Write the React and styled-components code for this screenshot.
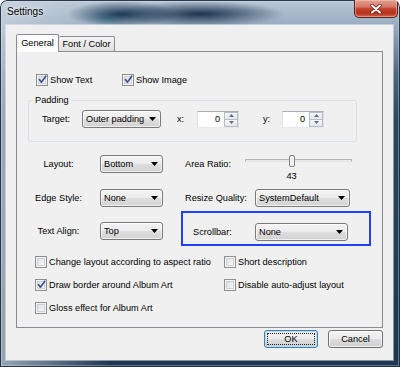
import React from "react";
import styled, { createGlobalStyle } from "styled-components";

const FONT = `"Liberation Sans", Arial, sans-serif`;

const Global = createGlobalStyle`
  html, body { margin: 0; padding: 0; background: #ffffff; }
  body { font-family: ${FONT}; font-size: 9.2px; color: #000; }
  *, *::before, *::after { box-sizing: border-box; }
`;

const Window = styled.div`
  width: 400px;
  height: 367px;
  display: flex;
  flex-direction: column;
  border-radius: 7px 7px 0 0;
  overflow: hidden;
  background:
    radial-gradient(55px 13px at 122px 14px, rgba(22, 50, 80, 0.95), rgba(22, 50, 80, 0)),
    radial-gradient(85px 13px at 200px 14px, rgba(20, 42, 70, 0.95), rgba(20, 42, 70, 0)),
    radial-gradient(22px 7px at 108px 18px, rgba(70, 150, 160, 0.6), rgba(70, 150, 160, 0)),
    radial-gradient(45px 5px at 230px 12px, rgba(140, 165, 190, 0.55), rgba(140, 165, 190, 0)),
    linear-gradient(to right, rgba(205, 215, 226, 0.7) 0px, rgba(205, 215, 226, 0) 110px),
    linear-gradient(to bottom, #b9c7d5 0px, #9db0c3 22px, #7f95ab 42px, #4c6581 75px, #2c4561 120px, #1e3650 100%);
  box-shadow: inset 0 0 0 1px rgba(25, 40, 58, 0.9), inset 0 0 0 2px rgba(220, 230, 240, 0.35);
`;

const TitleBar = styled.div`
  height: 25px;
  flex: none;
  display: flex;
  justify-content: space-between;
  align-items: flex-start;
  padding-left: 7px;
`;

const Title = styled.div`
  padding-top: 6px;
  font-family: ${FONT};
  font-size: 10px;
  line-height: 12px;
  color: #000;
  text-shadow: 0 0 6px rgba(255, 255, 255, 0.9), 0 0 3px rgba(255, 255, 255, 0.8);
`;

const CloseButton = styled.div`
  width: 44px;
  height: 18px;
  margin-right: 2px;
  display: flex;
  align-items: center;
  justify-content: center;
  border: 1px solid #5a2220;
  border-top: none;
  border-radius: 0 0 5px 5px;
  background: linear-gradient(to bottom, #e2a093 0%, #d77866 40%, #c2412d 52%, #b8321f 78%, #d2664a 100%);
  box-shadow: inset 0 0 0 1px rgba(255, 210, 200, 0.45);
`;

const Frame = styled.div`
  flex: 1;
  display: flex;
  padding: 0 7px 7px 6px;
`;

const Client = styled.div`
  flex: 1;
  display: flex;
  flex-direction: column;
  padding: 9px 10px 12px 10px;
  background: #f0f0f0;
  box-shadow: 0 0 0 1px rgba(235, 240, 245, 0.5);
`;

const TabStrip = styled.div`
  height: 17px;
  display: flex;
  align-items: flex-end;
  position: relative;
  z-index: 1;
`;

const Tab = styled.div`
  width: ${(p) => p.$w}px;
  height: ${(p) => (p.$active ? 18 : 15)}px;
  margin-bottom: ${(p) => (p.$active ? -1 : 0)}px;
  border: 1px solid #898c95;
  border-bottom: none;
  border-left-width: ${(p) => (p.$first ? 1 : 0)}px;
  border-radius: 2px 2px 0 0;
  display: flex;
  align-items: center;
  justify-content: center;
  padding-bottom: ${(p) => (p.$active ? 1 : 0)}px;
  white-space: nowrap;
  background: ${(p) =>
    p.$active ? "#fcfcfc" : "linear-gradient(to bottom, #f4f4f4 0%, #eaeaea 50%, #e0e0e0 100%)"};
`;

const Panel = styled.div`
  height: 277px;
  flex: none;
  border: 1px solid #898c95;
  background: #f0f0f0;
  display: flex;
  flex-direction: column;
`;

const TopChecks = styled.div`
  margin: 21px 0 0 19px;
  display: grid;
  grid-template-columns: 86px auto;
`;

const CheckItem = styled.label`
  display: flex;
  align-items: center;
  gap: 2px;
  height: 13px;
  white-space: nowrap;
`;

const Box = styled.span`
  width: 12px;
  height: 12px;
  flex: none;
  display: flex;
  align-items: center;
  justify-content: center;
  border: 1px solid #8e8f8f;
  background: linear-gradient(135deg, #d6d8db 0%, #eceef0 55%, #fbfbfb 100%);
  box-shadow: inset 0 0 0 1px #f4f4f4, inset 0 0 0 2px #cdd0d4;
`;

const GroupBox = styled.fieldset`
  margin: 9px 0 0 11px;
  width: 329px;
  padding: 0;
  border: 1px solid #d5dfe5;
  border-radius: 3px;
`;

const GroupTitle = styled.legend`
  margin-left: 4px;
  padding: 0 2px;
  font-size: 9.2px;
  line-height: 11px;
`;

const GroupRow = styled.div`
  display: flex;
  align-items: center;
  height: 35px;
  padding: 4px 0 13px 13px;
`;

const FieldLabel = styled.div`
  width: ${(p) => p.$w}px;
  margin-left: ${(p) => p.$ml || 0}px;
  height: 18px;
  line-height: 18px;
  text-align: ${(p) => p.$align || "left"};
  white-space: nowrap;
  flex: none;
`;

const SelectBox = styled.div`
  width: ${(p) => p.$w}px;
  height: 18px;
  flex: none;
  display: flex;
  align-items: center;
  justify-content: space-between;
  padding: 0 4px 0 3px;
  border: 1px solid #7a7a7a;
  border-radius: 3px;
  background: linear-gradient(to bottom, #f4f4f4 0%, #ececec 48%, #dedede 52%, #d2d2d2 100%);
  box-shadow: inset 0 0 0 1px rgba(255, 255, 255, 0.65);
  white-space: nowrap;
`;

const Spin = styled.div`
  width: 42px;
  height: 17px;
  flex: none;
  display: flex;
  border: 1px solid;
  border-color: #abadb3 #dbdfe6 #e3e9ef #e2e3ea;
  background: #ffffff;
`;

const SpinValue = styled.div`
  flex: 1;
  text-align: right;
  padding-right: 4px;
  line-height: 15px;
`;

const SpinButtons = styled.div`
  width: 14px;
  display: flex;
  flex-direction: column;
`;

const SpinButton = styled.div`
  flex: 1;
  display: flex;
  align-items: center;
  justify-content: center;
  border: 1px solid #b7bdc6;
  border-top-width: ${(p) => (p.$down ? 0 : 1)}px;
  background: linear-gradient(to bottom, #f7f7f7, #e4e6e9);
`;

const Row = styled.div`
  display: flex;
  align-items: flex-start;
  height: ${(p) => p.$h}px;
  margin-top: ${(p) => p.$mt || 0}px;
`;

const Pair = styled.div`
  display: flex;
  margin-top: ${(p) => p.$mt || 0}px;
`;

const Slider = styled.div`
  width: 107px;
  flex: none;
  display: flex;
  flex-direction: column;
`;

const TrackArea = styled.div`
  position: relative;
  height: 12px;
  padding-top: 4px;
`;

const Track = styled.div`
  height: 3px;
  border: 1px solid #b3b3b3;
  border-bottom-color: #e6e6e6;
  background: #e7eaea;
  border-radius: 1px;
`;

const Thumb = styled.div`
  position: absolute;
  top: 0;
  width: 6px;
  height: 12px;
  border: 1px solid #7d7d7d;
  border-radius: 2px;
  background: linear-gradient(to right, #fafafa, #e3e3e3);
  box-shadow: inset 0 0 0 1px rgba(255, 255, 255, 0.6);
`;

const SliderValue = styled.div`
  margin-top: 4px;
  line-height: 11px;
  white-space: nowrap;
`;

const Highlight = styled.div`
  margin-left: 18px;
  width: 190px;
  height: 35px;
  flex: none;
  display: flex;
  align-items: flex-start;
  padding: 10px 0 0 10px;
  border: 2px solid #2040ff;
`;

const BottomChecks = styled.div`
  margin: 9px 0 0 18px;
  display: grid;
  grid-template-columns: 189px auto;
  row-gap: 10px;
`;

const ButtonRow = styled.div`
  margin-top: 2px;
  display: flex;
  justify-content: flex-end;
  gap: 10px;
`;

const Button = styled.button`
  width: ${(p) => p.$w}px;
  height: 18px;
  padding: 0;
  font-family: ${FONT};
  font-size: 9.2px;
  color: #000;
  border: 1px solid ${(p) => (p.$default ? "#3c7fb1" : "#707070")};
  border-radius: 3px;
  background: linear-gradient(to bottom, #f2f2f2 0%, #ebebeb 48%, #dddddd 52%, #cfcfcf 100%);
  box-shadow: inset 0 0 0 1px ${(p) => (p.$default ? "#b6dcf3" : "rgba(255,255,255,0.7)")};
  outline: ${(p) => (p.$default ? "1px dotted #222" : "none")};
  outline-offset: -4px;
`;

const CheckMark = () => (
  <svg width="9" height="9" viewBox="0 0 9 9">
    <path
      d="M1.4 4.6 L3.4 7.2 L7.8 1.2"
      fill="none"
      stroke="#3d4f8c"
      strokeWidth="1.6"
      strokeLinecap="round"
      strokeLinejoin="round"
    />
  </svg>
);

const Arrow = () => (
  <svg width="7" height="4" viewBox="0 0 7 4">
    <path d="M0 0 H7 L3.5 4 Z" fill="#000" />
  </svg>
);

const SpinArrow = ({ down }) => (
  <svg width="5" height="3" viewBox="0 0 5 3">
    <path d={down ? "M0 0 H5 L2.5 3 Z" : "M0 3 H5 L2.5 0 Z"} fill="#5a6d93" />
  </svg>
);

const CloseGlyph = () => (
  <svg width="12" height="10" viewBox="0 0 12 10">
    <path d="M2 1.5 L10 8.5 M10 1.5 L2 8.5" stroke="#5b1a12" strokeWidth="3.4" strokeLinecap="round" />
    <path d="M2 1.5 L10 8.5 M10 1.5 L2 8.5" stroke="#ffffff" strokeWidth="2" strokeLinecap="round" />
  </svg>
);

const Check = ({ checked, children }) => (
  <CheckItem>
    <Box>{checked && <CheckMark />}</Box>
    <span>{children}</span>
  </CheckItem>
);

const Select = ({ w, children }) => (
  <SelectBox $w={w}>
    <span>{children}</span>
    <Arrow />
  </SelectBox>
);

const SpinBox = ({ value }) => (
  <Spin>
    <SpinValue>{value}</SpinValue>
    <SpinButtons>
      <SpinButton>
        <SpinArrow />
      </SpinButton>
      <SpinButton $down>
        <SpinArrow down />
      </SpinButton>
    </SpinButtons>
  </Spin>
);

const TrackBar = ({ value, width = 107, thumb = 6 }) => {
  const left = Math.round((width - thumb) * (value / 100)) + 0.5;
  return (
    <Slider>
      <TrackArea>
        <Track />
        <Thumb style={{ left }} />
      </TrackArea>
      <SliderValue style={{ paddingLeft: left - 2 }}>{value}</SliderValue>
    </Slider>
  );
};

export default function App() {
  return (
    <>
      <Global />
      <Window>
        <TitleBar>
          <Title>Settings</Title>
          <CloseButton>
            <CloseGlyph />
          </CloseButton>
        </TitleBar>
        <Frame>
          <Client>
            <TabStrip>
              <Tab $active $first $w={43}>
                General
              </Tab>
              <Tab $w={56}>Font / Color</Tab>
            </TabStrip>
            <Panel>
              <TopChecks>
                <Check checked>Show Text</Check>
                <Check checked>Show Image</Check>
              </TopChecks>

              <GroupBox>
                <GroupTitle>Padding</GroupTitle>
                <GroupRow>
                  <FieldLabel $w={40}>Target:</FieldLabel>
                  <Select w={79}>Outer padding</Select>
                  <FieldLabel $w={20} $ml={16}>
                    x:
                  </FieldLabel>
                  <SpinBox value="0" />
                  <FieldLabel $w={19} $ml={24}>
                    y:
                  </FieldLabel>
                  <SpinBox value="0" />
                </GroupRow>
              </GroupBox>

              <Row $h={34} $mt={13}>
                <FieldLabel $w={83} $align="center">
                  Layout:
                </FieldLabel>
                <Select w={63}>Bottom</Select>
                <FieldLabel $w={60} $ml={22}>
                  Area Ratio:
                </FieldLabel>
                <TrackBar value={43} />
              </Row>

              <Row $h={18}>
                <FieldLabel $w={83} $align="center">
                  Edge Style:
                </FieldLabel>
                <Select w={63}>None</Select>
                <FieldLabel $w={70} $ml={22}>
                  Resize Quality:
                </FieldLabel>
                <Select w={95}>SystemDefault</Select>
              </Row>

              <Row $h={35} $mt={4}>
                <Pair $mt={11}>
                  <FieldLabel $w={83} $align="center">
                    Text Align:
                  </FieldLabel>
                  <Select w={63}>Top</Select>
                </Pair>
                <Highlight>
                  <FieldLabel $w={62}>Scrollbar:</FieldLabel>
                  <Select w={93}>None</Select>
                </Highlight>
              </Row>

              <BottomChecks>
                <Check>Change layout according to aspect ratio</Check>
                <Check>Short description</Check>
                <Check checked>Draw border around Album Art</Check>
                <Check>Disable auto-adjust layout</Check>
                <Check>Gloss effect for Album Art</Check>
              </BottomChecks>
            </Panel>
            <ButtonRow>
              <Button $default $w={54}>
                OK
              </Button>
              <Button $w={55}>Cancel</Button>
            </ButtonRow>
          </Client>
        </Frame>
      </Window>
    </>
  );
}
